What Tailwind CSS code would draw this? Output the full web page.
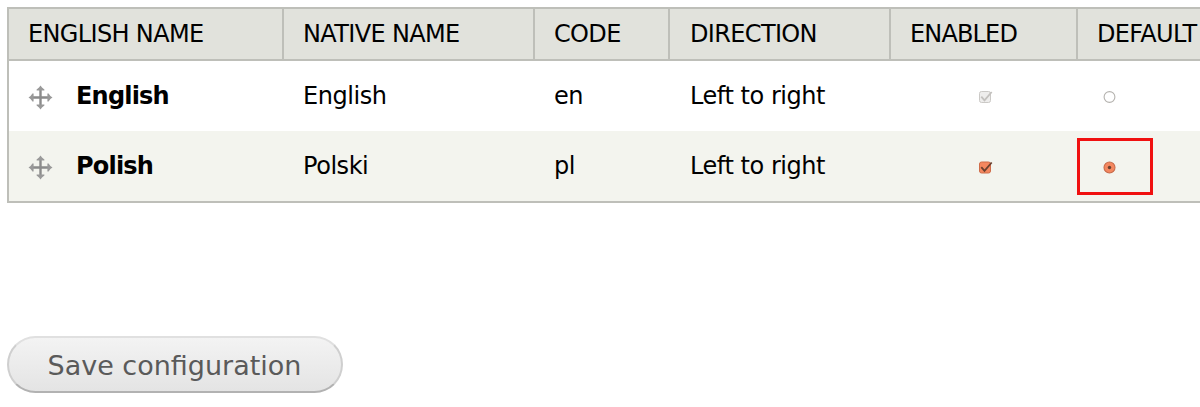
<!DOCTYPE html>
<html lang="en"><head><meta charset="utf-8"><title>Languages</title>
<script src="https://cdn.jsdelivr.net/npm/@tailwindcss/browser@4"></script></head>
<body class="bg-white text-black font-['DejaVu_Sans',sans-serif]">
<svg class="hidden">
<symbol id="move" viewBox="0 0 25 25"><path d="M12.5 3v19M3 12.5h19" stroke="#8b8b8b" stroke-width="2.4"/><path d="M12.5 .5 14 2.6 16.4 4.4V5.6H8.6V4.4L11 2.6zM12.5 24.5 14 22.4 16.4 20.6V19.4H8.6v1.2L11 22.4zM.5 12.5 2.6 11 4.4 8.6H5.6v7.8H4.4L2.6 14zM24.5 12.5 22.4 11 20.6 8.6H19.4v7.8h1.2L22.4 14z" fill="#999"/></symbol>
</svg>
<main class="h-[407px] w-full overflow-hidden pl-[7px] pt-[7px]">
<table class="w-full table-fixed border-collapse border-2 border-r-0 border-[#bebfb9] text-[24px] leading-7 whitespace-nowrap">
<colgroup><col class="w-[275px]"><col class="w-[251px]"><col class="w-[135px]"><col class="w-[221px]"><col class="w-[187px]"><col></colgroup>
<thead><tr class="h-[52px] bg-[#e1e2dc] text-left tracking-[-0.65px]">
<th class="border-2 border-[#bebfb9] p-0 pl-[19px] font-normal">ENGLISH NAME</th><th class="border-2 border-[#bebfb9] p-0 pl-[19px] font-normal">NATIVE NAME</th><th class="border-2 border-[#bebfb9] p-0 pl-[19px] font-normal">CODE</th><th class="border-2 border-[#bebfb9] p-0 pl-5 font-normal">DIRECTION</th><th class="border-2 border-[#bebfb9] p-0 pl-[19px] font-normal tracking-[-0.85px]">ENABLED</th><th class="border-2 border-r-0 border-[#bebfb9] p-0 pl-[19px] font-normal">DEFAULT</th></tr></thead>
<tbody class="tracking-[-0.45px]">
<tr class="h-[71px]"><td class="p-0 pl-[19px] font-bold tracking-[-0.8px]"><div class="flex items-center gap-[23px]"><svg class="mt-[2px] size-[25px]"><use href="#move"/></svg>English</div></td><td class="pl-5">English</td><td class="pl-5">en</td><td class="pl-[21px]">Left to right</td>
<td class="p-0"><svg class="ml-[87px] mt-[2px] block h-4 w-4" viewBox="0 0 16 16"><rect x="2.5" y="2.5" width="11" height="11" rx="2" fill="#eeedec" stroke="#cbc9c6"/><path d="m4.3 7.7 3.2 3.6L14.7 3" fill="none" stroke="#c3c1be" stroke-width="1.8"/></svg></td>
<td class="p-0"><svg class="ml-[24px] mt-[2px] block h-4 w-4" viewBox="0 0 16 16"><circle cx="8.5" cy="8" r="5.4" fill="#fff" stroke="#b5b3af" stroke-width="1.1"/></svg></td></tr>
<tr class="h-[71px] bg-[#f3f4ee]"><td class="p-0 pl-[19px] font-bold tracking-[-0.8px]"><div class="flex items-center gap-[23px]"><svg class="mt-[2px] size-[25px]"><use href="#move"/></svg>Polish</div></td><td class="pl-5">Polski</td><td class="pl-5">pl</td><td class="pl-[21px]">Left to right</td>
<td class="p-0"><svg class="ml-[87px] mt-[2px] block h-4 w-4" viewBox="0 0 16 16"><rect x="2.5" y="3" width="11" height="11" rx="2" fill="#f4875f" stroke="#cf6c49"/><path d="m4.3 8.2 3.2 3.6L14.7 3.5" fill="none" stroke="#69402f" stroke-width="1.8"/></svg></td>
<td class="p-0"><div class="relative ml-[24px] mt-[2px] h-4 w-4"><svg class="block h-4 w-4" viewBox="0 0 16 16"><circle cx="8.5" cy="8.5" r="5.5" fill="#f4875f" stroke="#c66b4b" stroke-width="1.1"/><circle cx="8.5" cy="8.5" r="1.7" fill="#69402f"/></svg><span class="absolute -left-[24px] -top-[21px] h-[57px] w-[76px] border-[3px] border-[#f01010]"></span></div></td></tr></tbody></table>
<button class="mt-[133px] block h-[57px] w-[336px] rounded-full border-2 border-x-[#cfcfcf] border-t-[#e0e0e0] border-b-[#b2b2b2] bg-linear-to-b from-[#f3f3f3] to-[#e4e4e4] pr-px pt-[3px] text-[27px] leading-8 text-[#5a5a5a]">Save configuration</button>
</main>
</body></html>
